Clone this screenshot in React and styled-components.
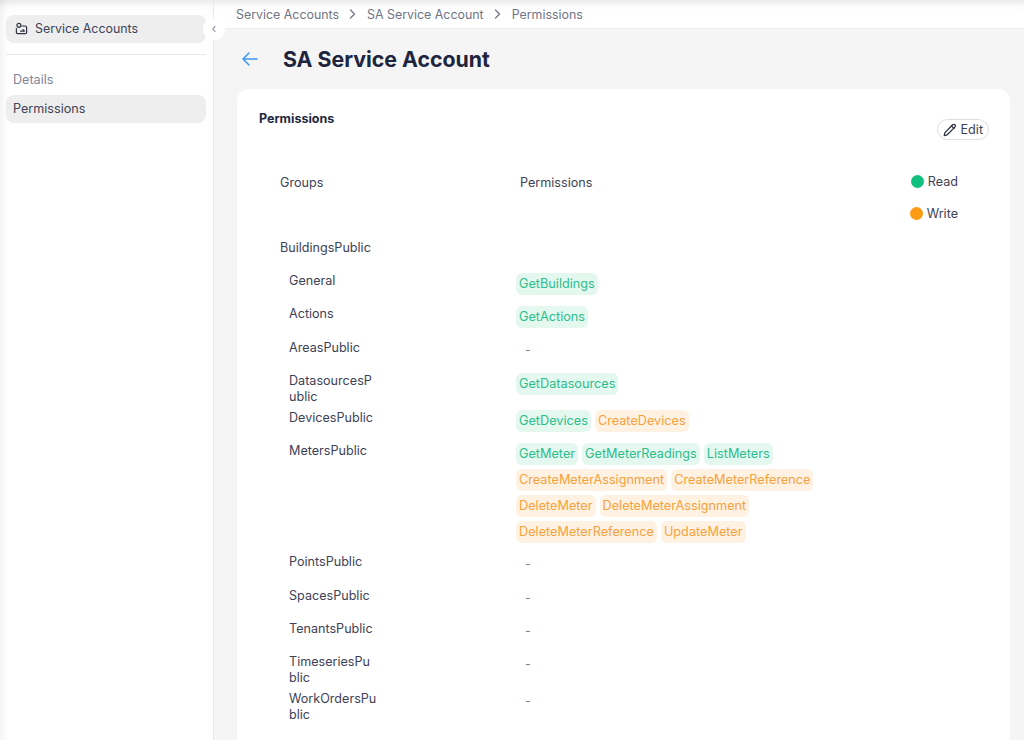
import React from 'react';
import styled, { createGlobalStyle } from 'styled-components';

const GlobalStyle = createGlobalStyle`
  html, body { margin: 0; height: 100%; overflow: hidden; }
  body { font-family: Inter, "Noto Sans", sans-serif; background: #f5f5f5; color: #3d4257; }
`;

const Page = styled.div`
  display: flex;
  width: 1024px;
  height: 740px;
  overflow: hidden;
  position: relative;
`;

const Sidebar = styled.aside`
  position: relative;
  width: 214px;
  flex-shrink: 0;
  box-sizing: border-box;
  padding: 15px 7px 0 6px;
  background: #fff;
  border-right: 1px solid #e9e9ec;
  box-shadow: inset 0 10px 10px -8px rgba(0, 0, 0, 0.12), inset 10px 0 10px -8px rgba(0, 0, 0, 0.07);
`;

const NavItem = styled.div`
  display: flex;
  align-items: center;
  gap: 7px;
  height: 28px;
  box-sizing: border-box;
  padding: 0 ${(props) => (props.$icon ? '9px' : '7px')} 2px;
  border-radius: 8px;
  background: #eeeeee;
  font-size: ${(props) => (props.$icon ? '12.4px' : '12.6px')};
  color: #3d4257;
`;

const Divider = styled.div`
  height: 1px;
  background: #e8e8ea;
  margin: 11px 0 17px;
`;

const SideLabel = styled.div`
  font-size: 12.6px;
  line-height: 16px;
  color: #80859a;
  padding: 0 7px;
  margin-bottom: 7px;
`;

const Collapse = styled.button`
  position: absolute;
  top: 18px;
  right: -12px;
  width: 22px;
  height: 22px;
  padding: 0;
  border: 0;
  border-radius: 50%;
  background: #fff;
  color: #8a8f9e;
  display: flex;
  align-items: center;
  justify-content: center;
  z-index: 2;
`;

const Main = styled.main`
  flex: 1;
  min-width: 0;
  display: flex;
  flex-direction: column;
  overflow: hidden;
`;

const Topbar = styled.div`
  height: 29px;
  flex-shrink: 0;
  box-sizing: border-box;
  display: flex;
  align-items: center;
  gap: 10px;
  padding: 0 22px;
  background: #fff;
  border-bottom: 1px solid #eeeeef;
  box-shadow: inset 0 10px 10px -8px rgba(0, 0, 0, 0.12);
  font-size: 12.4px;
  color: #6f7485;
`;

const Crumb = styled.span`
  white-space: nowrap;
`;

const Heading = styled.div`
  display: flex;
  align-items: center;
  flex-shrink: 0;
  height: 60px;
  padding-left: 27px;
  gap: 24px;
`;

const Title = styled.h1`
  margin: 0;
  font-size: 21.3px;
  font-weight: 700;
  color: #20253f;
`;

const Card = styled.section`
  position: relative;
  flex-shrink: 0;
  margin: 0 14px 0 23px;
  min-height: 700px;
  background: #fff;
  border-radius: 12px 12px 0 0;
  padding: 22px 22px 0;
`;

const CardTitle = styled.h2`
  margin: 0;
  font-size: 12.5px;
  line-height: 16px;
  font-weight: 700;
  color: #232842;
`;

const EditButton = styled.button`
  position: absolute;
  top: 30px;
  right: 21px;
  height: 21px;
  box-sizing: border-box;
  display: flex;
  align-items: center;
  gap: 4px;
  padding: 0 5px 0 5px;
  background: #fff;
  border: 1px solid #dcdde1;
  border-radius: 11px;
  font: inherit;
  font-size: 12.6px;
  color: #3d4257;
`;

const Legend = styled.div`
  position: absolute;
  top: 83px;
  right: 52px;
  display: flex;
  flex-direction: column;
  align-items: flex-end;
  gap: 14px;
`;

const LegendItem = styled.div`
  display: flex;
  align-items: center;
  gap: 4px;
  height: 18px;
  font-size: 12.6px;
  color: #3d4257;
`;

const Dot = styled.span`
  width: 13px;
  height: 13px;
  border-radius: 50%;
  background: ${(props) => props.$color};
`;

const Table = styled.div`
  display: grid;
  grid-template-columns: 236px 1fr;
  padding: 40px 0 0 21px;
  font-size: 12.6px;
  color: #3d4257;
`;

const HeadCell = styled.div`
  line-height: 16px;
  padding: 8px 0 49px ${(props) => (props.$tags ? '4px' : '0')};
`;

const GroupCell = styled.div`
  grid-column: 1 / -1;
  line-height: 16px;
  padding-bottom: 17px;
`;

const NameCell = styled.div`
  width: 88px;
  margin-left: 9px;
  line-height: 16px;
  padding-bottom: 5px;
  word-break: break-all;
`;

const TagCell = styled.div`
  display: flex;
  flex-wrap: wrap;
  align-content: flex-start;
  width: 310px;
  padding-bottom: 7.3px;
`;

const Tag = styled.span`
  height: 22px;
  line-height: 22px;
  margin: 0 4px 4px 0;
  padding: 0 3px;
  border-radius: 6px;
  white-space: nowrap;
  font-size: 12.7px;
  background: ${(props) => (props.$write ? '#fff2e2' : '#e4f8f0')};
  color: ${(props) => (props.$write ? '#f6a13c' : '#2dbd8c')};
`;

const Dash = styled.span`
  height: 26px;
  line-height: 19px;
  padding-left: 9px;
  color: #7c8090;
`;

const ServiceIcon = () => (
  <svg width="13" height="13" viewBox="0 0 14 14" fill="none" stroke="#2f3344" strokeWidth="1.3" strokeLinecap="round" strokeLinejoin="round">
    <path d="M1.5 7v4.2a1.3 1.3 0 0 0 1.3 1.3h8.4a1.3 1.3 0 0 0 1.3-1.3V5.6a1.3 1.3 0 0 0-1.3-1.3H7.4" />
    <circle cx="4.2" cy="3.6" r="2.1" />
    <path d="M6 9.8h4.2M8.6 8.2l1.6 1.6" />
  </svg>
);

const Chevron = () => (
  <svg width="10" height="10" viewBox="0 0 10 10" fill="none" stroke="#a0a4b0" strokeWidth="1.2" strokeLinecap="round" strokeLinejoin="round">
    <path d="M6 2.5 3.8 5 6 7.5" />
  </svg>
);

const CrumbSep = () => (
  <svg width="8" height="10" viewBox="0 0 8 10" fill="none" stroke="#6f7485" strokeWidth="1.2" strokeLinecap="round" strokeLinejoin="round">
    <path d="M1.5 1 5.5 5 1.5 9" />
  </svg>
);

const BackArrow = () => (
  <svg width="18" height="16" viewBox="0 0 18 16" fill="none" stroke="#3f97ee" strokeWidth="1.5" strokeLinecap="round" strokeLinejoin="round">
    <path d="M16 8H2M8 2 2 8l6 6" />
  </svg>
);

const Pencil = () => (
  <svg width="14" height="14" viewBox="0 0 14 14" fill="none" stroke="#2f3344" strokeWidth="1.3" strokeLinecap="round" strokeLinejoin="round">
    <path d="M9.6 1.8a1.6 1.6 0 0 1 2.3 2.3l-7.7 7.7-3 .8.8-3z" />
    <path d="M8.5 3 11 5.5" />
  </svg>
);

const rows = [
  { name: 'General', read: ['GetBuildings'] },
  { name: 'Actions', read: ['GetActions'] },
  { name: 'AreasPublic' },
  { name: 'DatasourcesPublic', read: ['GetDatasources'] },
  { name: 'DevicesPublic', read: ['GetDevices'], write: ['CreateDevices'] },
  {
    name: 'MetersPublic',
    read: ['GetMeter', 'GetMeterReadings', 'ListMeters'],
    write: [
      'CreateMeterAssignment',
      'CreateMeterReference',
      'DeleteMeter',
      'DeleteMeterAssignment',
      'DeleteMeterReference',
      'UpdateMeter',
    ],
  },
  { name: 'PointsPublic' },
  { name: 'SpacesPublic' },
  { name: 'TenantsPublic' },
  { name: 'TimeseriesPublic' },
  { name: 'WorkOrdersPublic' },
];

function App() {
  return (
    <Page>
      <GlobalStyle />
      <Sidebar>
        <NavItem $icon>
          <ServiceIcon />
          Service Accounts
        </NavItem>
        <Divider />
        <SideLabel>Details</SideLabel>
        <NavItem>Permissions</NavItem>
        <Collapse aria-label="Collapse">
          <Chevron />
        </Collapse>
      </Sidebar>
      <Main>
        <Topbar>
          <Crumb>Service Accounts</Crumb>
          <CrumbSep />
          <Crumb>SA Service Account</Crumb>
          <CrumbSep />
          <Crumb>Permissions</Crumb>
        </Topbar>
        <Heading>
          <BackArrow />
          <Title>SA Service Account</Title>
        </Heading>
        <Card>
          <CardTitle>Permissions</CardTitle>
          <EditButton>
            <Pencil />
            Edit
          </EditButton>
          <Legend>
            <LegendItem>
              <Dot $color="#10c07f" />
              Read
            </LegendItem>
            <LegendItem>
              <Dot $color="#ff9b12" />
              Write
            </LegendItem>
          </Legend>
          <Table>
            <HeadCell>Groups</HeadCell>
            <HeadCell $tags>Permissions</HeadCell>
            <GroupCell>BuildingsPublic</GroupCell>
            {rows.map((row) => (
              <React.Fragment key={row.name}>
                <NameCell>{row.name}</NameCell>
                <TagCell>
                  {row.read?.map((t) => <Tag key={t}>{t}</Tag>)}
                  {row.write?.map((t) => <Tag key={t} $write>{t}</Tag>)}
                  {!row.read && !row.write && <Dash>-</Dash>}
                </TagCell>
              </React.Fragment>
            ))}
          </Table>
        </Card>
      </Main>
    </Page>
  );
}

export default App;
